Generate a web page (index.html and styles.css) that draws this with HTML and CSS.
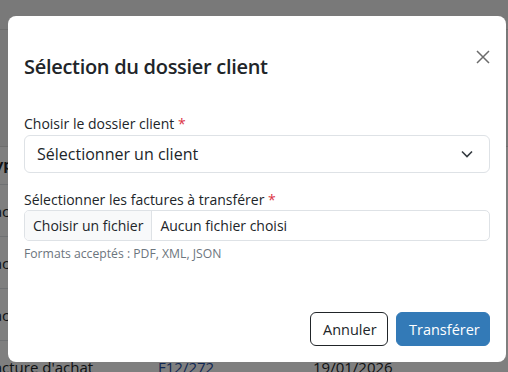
FILE: index.html
```html
<!DOCTYPE html>
<html lang="fr">
<head>
<meta charset="utf-8">
<title>Sélection du dossier client</title>
<link rel="stylesheet" href="styles.css">
</head>
<body>
<div class="page">
  <div class="topbar"></div>
  <div class="band"></div>
  <table class="grid">
    <thead>
      <tr><th>Type</th><th>Numéro</th><th>Date</th></tr>
    </thead>
    <tbody>
      <tr><td>Facture d'achat</td><td class="num">F12/268</td><td>15/01/2026</td></tr>
      <tr><td>Facture d'achat</td><td class="num">F12/269</td><td>16/01/2026</td></tr>
      <tr><td>Facture d'achat</td><td class="num">F12/270</td><td>17/01/2026</td></tr>
      <tr><td>Facture d'achat</td><td class="num">F12/272</td><td>19/01/2026</td></tr>
    </tbody>
  </table>
</div>
<div class="overlay">
  <div class="modal">
    <div class="modal-header">
      <h2 class="modal-title">Sélection du dossier client</h2>
      <button class="close" type="button" aria-label="Fermer">
        <svg width="14" height="14" viewBox="0 0 14 14"><path d="M1 1L13 13M13 1L1 13" stroke="#6c6c6c" stroke-width="1.5" fill="none"/></svg>
      </button>
    </div>
    <div class="modal-body">
      <div class="field">
        <label class="label">Choisir le dossier client <span class="req">*</span></label>
        <div class="select">
          <span>Sélectionner un client</span>
          <svg width="12" height="8" viewBox="0 0 12 8"><path d="M1 1.5L6 6.5L11 1.5" stroke="#343a40" stroke-width="1.6" fill="none"/></svg>
        </div>
      </div>
      <div class="field">
        <label class="label">Sélectionner les factures à transférer <span class="req">*</span></label>
        <div class="file">
          <span class="file-btn">Choisir un fichier</span>
          <span class="file-name">Aucun fichier choisi</span>
        </div>
        <div class="help">Formats acceptés : PDF, XML, JSON</div>
      </div>
    </div>
    <div class="modal-footer">
      <button class="btn btn-outline" type="button">Annuler</button>
      <button class="btn btn-primary" type="button">Transférer</button>
    </div>
  </div>
</div>
</body>
</html>
```

FILE: styles.css
```css
html, body {
  margin: 0;
  padding: 0;
}
body {
  width: 508px;
  height: 372px;
  overflow: hidden;
  font-family: "Open Sans", "Noto Sans", sans-serif;
  background: #fff;
  color: #212529;
  position: relative;
}
.page {
  height: 372px;
  overflow: hidden;
}
.topbar {
  height: 29px;
  border-bottom: 1px solid #ddd;
  background: #f3f3f3;
}
.band {
  height: 116px;
  border-bottom: 1px solid #ddd;
  background: #f3f3f3;
}
.grid {
  border-collapse: collapse;
  margin-left: -14px;
  font-size: 15px;
  white-space: nowrap;
}
.grid th, .grid td {
  text-align: left;
  border-bottom: 1px solid #dee2e6;
  height: 51px;
  padding: 0;
  vertical-align: middle;
}
.grid th {
  font-weight: 700;
  height: 33px;
  padding-bottom: 4px;
}
.grid th:nth-child(1), .grid td:nth-child(1) { width: 172px; }
.grid th:nth-child(2), .grid td:nth-child(2) { width: 155px; }
.grid td.num { color: #1f4fa8; }
.overlay {
  position: absolute;
  inset: 0;
  background: rgba(0, 0, 0, 0.5);
  padding: 16px 2px 0 8px;
}
.modal {
  width: 498px;
  height: 346px;
  background: #fff;
  border-radius: 8px;
  box-sizing: border-box;
  display: flex;
  flex-direction: column;
}
.modal-header {
  display: flex;
  justify-content: space-between;
  align-items: flex-start;
  padding: 34px 16px 0 16px;
  height: 98px;
  box-sizing: border-box;
}
.modal-title {
  margin: 3px 0 0 0;
  font-size: 20px;
  font-weight: 600;
  letter-spacing: -0.3px;
  line-height: 28px;
  color: #212529;
}
.close {
  border: 0;
  background: none;
  padding: 0;
  width: 14px;
  height: 14px;
  display: flex;
  cursor: pointer;
}
.modal-body {
  padding: 0 16px;
  flex: 1;
}
.field {
  margin-bottom: 17px;
}
.label {
  display: block;
  font-size: 14px;
  line-height: 20px;
  margin-bottom: 1px;
  color: #212529;
}
.field + .field .label {
  margin-bottom: 0;
}
.req {
  color: #dc3545;
}
.select {
  height: 38px;
  box-sizing: border-box;
  border: 1px solid #dee2e6;
  border-radius: 6px;
  display: flex;
  align-items: center;
  justify-content: space-between;
  padding: 0 16px 0 12px;
  font-size: 16px;
  color: #212529;
}
.file {
  height: 31px;
  box-sizing: border-box;
  border: 1px solid #dee2e6;
  border-radius: 5px;
  display: flex;
  align-items: stretch;
  font-size: 14px;
  overflow: hidden;
  white-space: nowrap;
}
.file-btn {
  background: #f8f9fa;
  border-right: 1px solid #dee2e6;
  padding: 0 8px;
  display: flex;
  align-items: center;
}
.file-name {
  padding: 0 8px;
  display: flex;
  align-items: center;
}
.help {
  font-size: 12.2px;
  color: #6c757d;
  margin-top: 4px;
}
.modal-footer {
  display: flex;
  justify-content: flex-end;
  gap: 8px;
  padding: 0 16px 16px 16px;
}
.btn {
  height: 34px;
  box-sizing: border-box;
  border-radius: 6px;
  font-family: inherit;
  font-size: 14.5px;
  padding: 0 12px;
  cursor: pointer;
}
.btn-outline {
  background: #fff;
  border: 1px solid #212529;
  color: #212529;
  width: 78px;
}
.btn-primary {
  background: #337ab7;
  border: 1px solid #337ab7;
  color: #fff;
  width: 94px;
  font-weight: 500;
}
```
